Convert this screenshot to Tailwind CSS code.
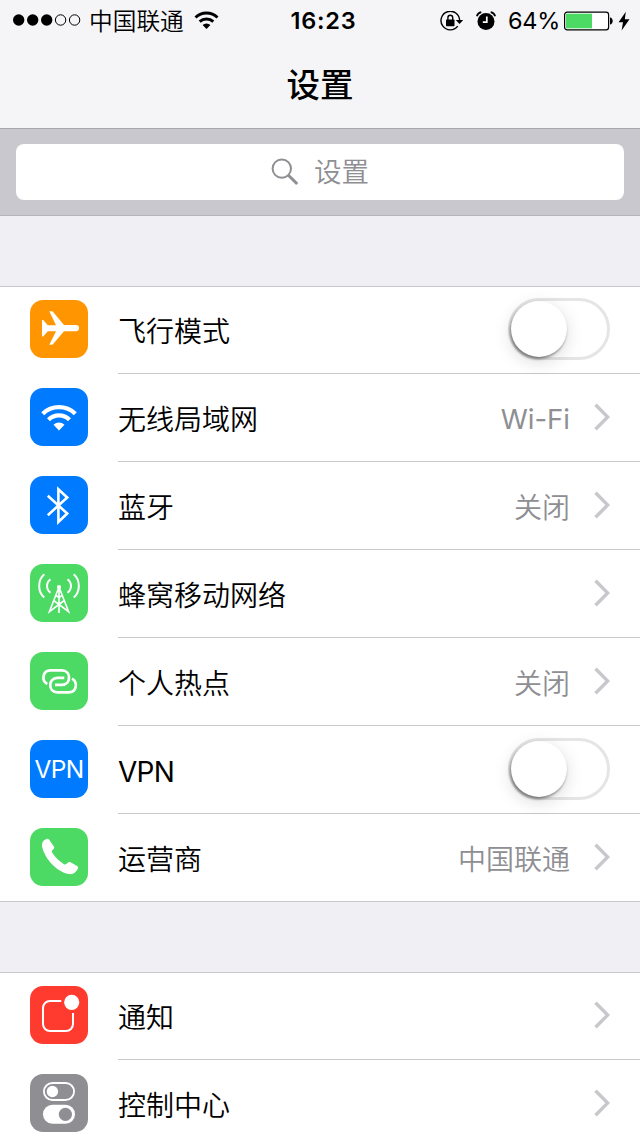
<!DOCTYPE html>
<html lang="zh-CN">

<head>
  <meta charset="UTF-8" />
  <meta name="viewport" content="width=device-width, initial-scale=1.0" />
  <title>设置</title>
  <script src="https://cdn.jsdelivr.net/npm/@tailwindcss/browser@4"></script>
  <style>
    body {
      font-family: Inter, 'Noto Sans CJK SC', sans-serif;
    }
  </style>
</head>

<body class="bg-[#efeff4] text-black w-[640px] h-[1136px] overflow-hidden">
  <!-- Header -->
  <header class="h-[129px] bg-[#f5f5f7] border-b border-[#a7a7ac]">
    <!-- Status bar -->
    <div class="grid grid-cols-[1fr_auto_1fr] items-center h-[41px] pl-[13px] pr-2 text-2xl leading-none">
      <div class="flex items-center">
        <svg class="w-[68px] h-3" viewBox="0 0 68 12">
          <circle cx="5.7" cy="6" r="5.7" />
          <circle cx="19.7" cy="6" r="5.7" />
          <circle cx="33.7" cy="6" r="5.7" />
          <circle cx="47.6" cy="6" r="5.2" fill="none" stroke="#000" />
          <circle cx="61.6" cy="6" r="5.2" fill="none" stroke="#000" />
        </svg>
        <span class="ml-2 pt-0.5 text-[23.7px] font-[350] whitespace-nowrap">中国联通</span>
        <svg class="ml-2.5 w-[25px] h-5 shrink-0" viewBox="0 0 25 20" fill="none" stroke="#000" stroke-width="3">
          <path d="M1.5 7.5a16 16 0 0 1 22 0M5.7 11.7a10 10 0 0 1 13.6 0" />
          <path d="M8.6 15a5.6 5.6 0 0 1 7.8 0L12.5 19z" fill="#000" stroke="none" />
        </svg>
      </div>
      <div class="font-semibold pt-px pl-0.5 text-[23.5px] tracking-[0.8px]">16:23</div>
      <div class="flex items-center justify-end">
        <!-- Rotation lock -->
        <svg class="w-6 h-5 shrink-0" viewBox="0 0 24 20">
          <path d="M17.7 15.2A9.3 9.3 0 1 1 19.6 9.5" fill="none" stroke="#000" stroke-width="1.4" />
          <path d="M15.8 9h7.4L19.5 13z" />
          <rect x="6" y="8.6" width="8.5" height="6.6" rx=".7" />
          <path d="M7.9 9V6.7a2.4 2.4 0 0 1 4.8 0V9" fill="none" stroke="#000" stroke-width="1.4" />
        </svg>
        <!-- Alarm -->
        <svg class="ml-3 w-5 h-5 shrink-0" viewBox="0 0 20 20">
          <circle cx="10" cy="10.5" r="8.5" />
          <path d="M.8 5.2A6 6 0 0 1 5.3 1.2M19.2 5.2A6 6 0 0 0 14.7 1.2" fill="none" stroke="#000" stroke-width="1.7" />
          <path d="M10.8 5.5V11.2H6.8" fill="none" stroke="#fff" stroke-width="1.7" />
        </svg>
        <span class="ml-3 pt-px text-[23.5px] tracking-[-0.3px]">64%</span>
        <!-- Battery -->
        <svg class="ml-1 w-[49px] h-5 shrink-0" viewBox="0 0 49 20">
          <rect x=".6" y="1.1" width="44" height="17.8" rx="2.6" fill="#fff" stroke="#000" stroke-width="1.2" />
          <rect x="2" y="2.7" width="26" height="14.6" fill="#4cd964" />
          <path d="M46 6.5c3.6.2 3.6 6.8 0 7z" />
        </svg>
        <svg class="ml-[5px] mr-0.5 w-3 h-5 shrink-0" viewBox="0 0 12 20">
          <path d="M7.8.8L.6 11.2H5L3.6 19.4L11.5 8.3H6.8z" />
        </svg>
      </div>
    </div>
    <h1 class="text-center text-[33.5px] leading-[88px] font-medium">设置</h1>
  </header>

  <!-- Search -->
  <div class="h-[87px] bg-[#c9c8ce] border-b border-[#b4b4b9] px-4 pt-[15px]">
    <div class="h-14 rounded-lg bg-white flex items-center justify-center gap-[15px] text-[27.5px] text-[#8e8e93]">
      <svg class="w-7 h-7" viewBox="0 0 28 28" fill="none" stroke="#8e8e93">
        <circle cx="10.8" cy="10.6" r="9.2" stroke-width="2" />
        <path d="M17.4 17.2L26.2 26" stroke-width="3" />
      </svg>
      <span class="font-[350] pt-0.5">设置</span>
    </div>
  </div>

  <!-- Connectivity -->
  <section class="mt-[70px] bg-white border-t border-[#c8c7cc]">
    <ul class="-mt-px text-[28px] font-[350]">
      <li class="flex h-[88px] pl-[30px] gap-[30px]">
        <svg class="mt-3.5 w-[58px] h-[58px] rounded-[13px] bg-[#ff9500]" viewBox="0 0 58 58" fill="#fff">
          <path d="M12 20h1.2l4.6 5.3h8.2L19.3 11.2h3.2L34 25h12a3.1 3.1 0 0 1 0 6.2H34L22.5 44.8H19.3l6.7-13.6H17.8l-4.6 5.3H12z" />
        </svg>
        <div class="flex-1 flex items-center justify-between border-b border-[#c8c7cc] pr-[30px]">
          <span class="pt-[5px]">飞行模式</span>
          <span class="-mt-px w-[102px] h-[62px] rounded-full border-3 border-[#e5e5e5] bg-white">
            <span class="block w-14 h-14 rounded-full bg-white shadow-[0_5px_18px_rgba(0,0,0,0.14),-1px_2px_3px_rgba(0,0,0,0.45)]"></span>
          </span>
        </div>
      </li>
      <li class="flex h-[88px] pl-[30px] gap-[30px]">
        <svg class="mt-3.5 w-[58px] h-[58px] rounded-[13px] bg-[#007aff]" viewBox="0 0 58 58" fill="none" stroke="#fff" stroke-width="4.3">
          <path d="M12.7 25.7a23.5 23.5 0 0 1 32.6 0M18.5 31.7a15.1 15.1 0 0 1 21 0" />
          <path d="M23.5 36.8a8 8 0 0 1 11 0L29 42.6z" fill="#fff" stroke="none" />
        </svg>
        <div class="flex-1 flex items-center border-b border-[#c8c7cc] pr-[30px]">
          <span class="flex-1 pt-[5px]">无线局域网</span>
          <span class="text-[#8e8e93] text-[27.5px] font-normal pt-1 mr-6">Wi-Fi</span>
          <svg class="-mt-px w-4 h-7" viewBox="0 0 16 28" fill="none" stroke="#c7c7cc" stroke-width="3.4"><path d="M1.5 1.7L13.7 14L1.5 26.3" /></svg>
        </div>
      </li>
      <li class="flex h-[88px] pl-[30px] gap-[30px]">
        <svg class="mt-3.5 w-[58px] h-[58px] rounded-[13px] bg-[#007aff]" viewBox="0 0 58 58" fill="none" stroke="#fff" stroke-width="2.6">
          <path d="M17.8 19.8L37.2 37.5L28.4 46V13.3L37.2 21.5L17.8 39.2" />
        </svg>
        <div class="flex-1 flex items-center border-b border-[#c8c7cc] pr-[30px]">
          <span class="flex-1 pt-[5px]">蓝牙</span>
          <span class="text-[#8e8e93] pt-[5px] mr-6">关闭</span>
          <svg class="-mt-px w-4 h-7" viewBox="0 0 16 28" fill="none" stroke="#c7c7cc" stroke-width="3.4"><path d="M1.5 1.7L13.7 14L1.5 26.3" /></svg>
        </div>
      </li>
      <li class="flex h-[88px] pl-[30px] gap-[30px]">
        <svg class="mt-3.5 w-[58px] h-[58px] rounded-[13px] bg-[#4cd964]" viewBox="0 0 58 58" fill="none" stroke="#fff" stroke-width="1.8">
          <path d="M14.3 10.3C7.5 16 7.5 28 14.3 33.5M43.7 10.3C50.5 16 50.5 28 43.7 33.5M20.5 15.3c-4.6 3.3-4.6 10.1 0 13.4M37.5 15.3c4.6 3.3 4.6 10.1 0 13.4" stroke-width="2" />
          <circle cx="29" cy="23" r="2.1" fill="#fff" stroke="none" />
          <path d="M29 23V49M28.6 24L19.4 47.6L33.6 37M29.4 24L38.6 47.6L24.4 37M26 31.5L29 33.5L32 31.5" stroke-width="1.6" />
        </svg>
        <div class="flex-1 flex items-center border-b border-[#c8c7cc] pr-[30px]">
          <span class="flex-1 pt-[5px]">蜂窝移动网络</span>
          <svg class="-mt-px w-4 h-7" viewBox="0 0 16 28" fill="none" stroke="#c7c7cc" stroke-width="3.4"><path d="M1.5 1.7L13.7 14L1.5 26.3" /></svg>
        </div>
      </li>
      <li class="flex h-[88px] pl-[30px] gap-[30px]">
        <svg class="mt-3.5 w-[58px] h-[58px] rounded-[13px] bg-[#4cd964]" viewBox="0 0 58 58" fill="none" stroke="#fff" stroke-width="2.7">
          <path d="M17.3 32C11.2 28.5 12.5 18.4 20.5 18.4H31.8C41.5 18.4 41.5 32.8 31.8 32.8H25" />
          <path d="M42 26.6C48.1 30.1 46.8 40.3 38.8 40.3H27.5C17.8 40.3 17.8 25.9 27.5 25.9H34.3" />
        </svg>
        <div class="flex-1 flex items-center border-b border-[#c8c7cc] pr-[30px]">
          <span class="flex-1 pt-[5px]">个人热点</span>
          <span class="text-[#8e8e93] pt-[5px] mr-6">关闭</span>
          <svg class="-mt-px w-4 h-7" viewBox="0 0 16 28" fill="none" stroke="#c7c7cc" stroke-width="3.4"><path d="M1.5 1.7L13.7 14L1.5 26.3" /></svg>
        </div>
      </li>
      <li class="flex h-[88px] pl-[30px] gap-[30px]">
        <div class="mt-3.5 w-[58px] h-[58px] rounded-[13px] bg-[#007aff] text-white text-[24.5px] font-normal tracking-[-0.7px] leading-[58px] text-center">VPN</div>
        <div class="flex-1 flex items-center justify-between border-b border-[#c8c7cc] pr-[30px]">
          <span class="pt-1 font-normal tracking-[-0.7px]">VPN</span>
          <span class="-mt-px w-[102px] h-[62px] rounded-full border-3 border-[#e5e5e5] bg-white">
            <span class="block w-14 h-14 rounded-full bg-white shadow-[0_5px_18px_rgba(0,0,0,0.14),-1px_2px_3px_rgba(0,0,0,0.45)]"></span>
          </span>
        </div>
      </li>
      <li class="flex h-[88px] pl-[30px] gap-[30px] border-b border-[#c8c7cc]">
        <svg class="mt-3.5 w-[58px] h-[58px] rounded-[13px] bg-[#4cd964]" viewBox="0 0 58 58" fill="#fff">
          <path d="M16.5 11c1.3-.5 2.2-.1 2.9 1l4.5 6.6c.5.8.4 1.5-.2 2.2l-1.5 1.8c-.5.7-.4 1.4.1 2.2 3.2 4.8 7 8.6 11.7 11.4.8.5 1.5.5 2.2-.1l2-1.7c.7-.6 1.5-.6 2.3-.1l6.6 3.7c1.1.7 1.3 1.5.8 2.6-1.5 3.4-4.8 6.3-9.2 5.5C26 43.5 14.5 30 12.2 19c-.9-3.7.9-6.8 4.3-8z" />
        </svg>
        <div class="flex-1 flex items-center pr-[30px]">
          <span class="flex-1 pt-[5px]">运营商</span>
          <span class="text-[#8e8e93] pt-[5px] mr-6">中国联通</span>
          <svg class="-mt-px w-4 h-7" viewBox="0 0 16 28" fill="none" stroke="#c7c7cc" stroke-width="3.4"><path d="M1.5 1.7L13.7 14L1.5 26.3" /></svg>
        </div>
      </li>
    </ul>
  </section>

  <!-- Notifications -->
  <section class="mt-[70px] bg-white border-t border-[#c8c7cc]">
    <ul class="-mt-px text-[28px] font-[350]">
      <li class="flex h-[88px] pl-[30px] gap-[30px]">
        <svg class="mt-3.5 w-[58px] h-[58px] rounded-[13px] bg-[#ff3b30]" viewBox="0 0 58 58" fill="none" stroke="#fff" stroke-width="2">
          <path d="M31.3 15H20a7 7 0 0 0-7 7v16a7 7 0 0 0 7 7h16a7 7 0 0 0 7-7V27" />
          <circle cx="41.7" cy="16.3" r="7.6" fill="#fff" stroke="none" />
        </svg>
        <div class="flex-1 flex items-center border-b border-[#c8c7cc] pr-[30px]">
          <span class="flex-1 pt-[5px]">通知</span>
          <svg class="-mt-px w-4 h-7" viewBox="0 0 16 28" fill="none" stroke="#c7c7cc" stroke-width="3.4"><path d="M1.5 1.7L13.7 14L1.5 26.3" /></svg>
        </div>
      </li>
      <li class="flex h-[88px] pl-[30px] gap-[30px]">
        <svg class="mt-3.5 w-[58px] h-[58px] rounded-[13px] bg-[#8e8e93]" viewBox="0 0 58 58" fill="#fff">
          <rect x="13.9" y="9" width="30.2" height="17" rx="8.5" fill="none" stroke="#fff" stroke-width="1.8" />
          <circle cx="22.4" cy="17.5" r="5.7" />
          <rect x="13" y="30.8" width="32" height="19" rx="9.5" />
          <circle cx="35.4" cy="40.3" r="6.6" fill="#8e8e93" />
        </svg>
        <div class="flex-1 flex items-center border-b border-[#c8c7cc] pr-[30px]">
          <span class="flex-1 pt-[5px]">控制中心</span>
          <svg class="-mt-px w-4 h-7" viewBox="0 0 16 28" fill="none" stroke="#c7c7cc" stroke-width="3.4"><path d="M1.5 1.7L13.7 14L1.5 26.3" /></svg>
        </div>
      </li>
    </ul>
  </section>
</body>

</html>
